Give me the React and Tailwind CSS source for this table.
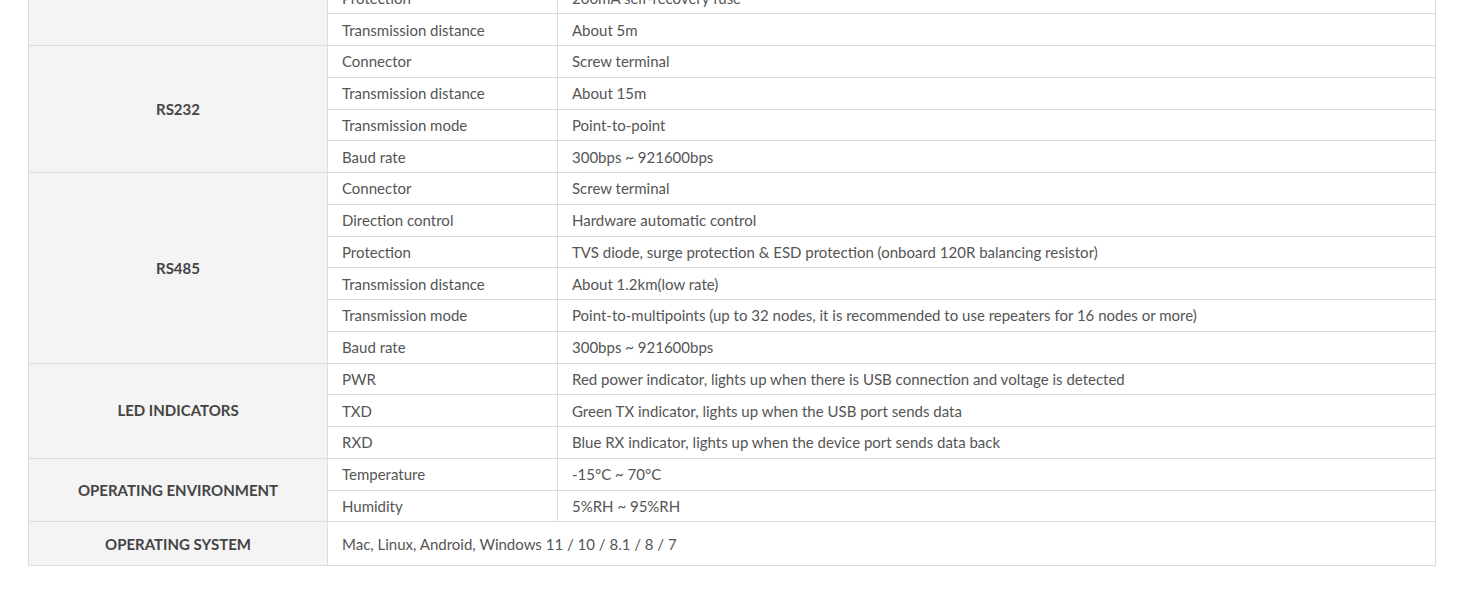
import React from "react";

const specs = [
  {
    group: "USB",
    rows: [
      ["Operating voltage", "5V"],
      ["Connector", "USB-A"],
      ["Protection", "200mA self-recovery fuse"],
      ["Transmission distance", "About 5m"],
    ],
  },
  {
    group: "RS232",
    rows: [
      ["Connector", "Screw terminal"],
      ["Transmission distance", "About 15m"],
      ["Transmission mode", "Point-to-point"],
      ["Baud rate", "300bps ~ 921600bps"],
    ],
  },
  {
    group: "RS485",
    rows: [
      ["Connector", "Screw terminal"],
      ["Direction control", "Hardware automatic control"],
      ["Protection", "TVS diode, surge protection & ESD protection (onboard 120R balancing resistor)"],
      ["Transmission distance", "About 1.2km(low rate)"],
      ["Transmission mode", "Point-to-multipoints (up to 32 nodes, it is recommended to use repeaters for 16 nodes or more)"],
      ["Baud rate", "300bps ~ 921600bps"],
    ],
  },
  {
    group: "LED INDICATORS",
    rows: [
      ["PWR", "Red power indicator, lights up when there is USB connection and voltage is detected"],
      ["TXD", "Green TX indicator, lights up when the USB port sends data"],
      ["RXD", "Blue RX indicator, lights up when the device port sends data back"],
    ],
  },
  {
    group: "OPERATING ENVIRONMENT",
    rows: [
      ["Temperature", "-15°C ~ 70°C"],
      ["Humidity", "5%RH ~ 95%RH"],
    ],
  },
];

export default function App() {
  return (
    <div className="bg-white min-h-screen overflow-hidden font-['Lato',sans-serif] text-[15px] text-[#555]">
      <div className="px-[28px] -mt-[82px] pb-10">
        <table className="w-[1408px] border-collapse table-fixed">
          <colgroup>
            <col className="w-[299px]" />
            <col className="w-[230px]" />
            <col />
          </colgroup>
          <tbody>
            {specs.map((section) =>
              section.rows.map(([label, value], i) => (
                <tr key={section.group + label} className="h-[31.75px]">
                  {i === 0 && (
                    <th
                      rowSpan={section.rows.length}
                      className="border border-[#dcdcdc] bg-[#f4f4f4] text-center font-bold text-[15px] text-[#444]"
                    >
                      {section.group}
                    </th>
                  )}
                  <td className="border border-[#dcdcdc] px-[14px] leading-[20px]">{label}</td>
                  <td className="border border-[#dcdcdc] px-[14px] leading-[20px]">{value}</td>
                </tr>
              ))
            )}
            <tr className="h-[44px]">
              <th className="border border-[#dcdcdc] bg-[#f4f4f4] text-center font-bold text-[15px] text-[#444]">
                OPERATING SYSTEM
              </th>
              <td colSpan={2} className="border border-[#dcdcdc] px-[14px]">
                Mac, Linux, Android, Windows 11 / 10 / 8.1 / 8 / 7
              </td>
            </tr>
          </tbody>
        </table>
      </div>
    </div>
  );
}
